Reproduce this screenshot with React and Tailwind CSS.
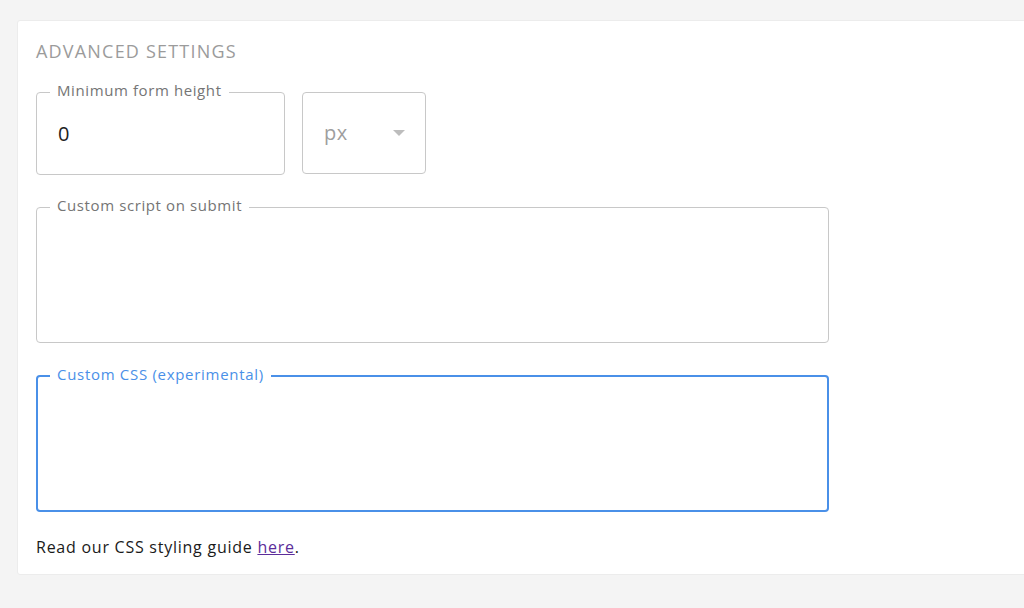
import React from "react";

export default function App() {
  const font = { fontFamily: "'Open Sans', Lato, sans-serif" };
  return (
    <div className="min-h-[608px] w-[1024px] bg-[#f4f4f4] pt-[20px] pl-[17px] overflow-hidden" style={font}>
      <div className="w-[1030px] bg-white rounded-[3px] border border-[#ececec] pl-[18px] pt-[20px] pb-[17px]">
        <div className="text-[18px] leading-[20px] text-[#9b9b9b] tracking-[1.2px]">ADVANCED SETTINGS</div>

        <div className="mt-[22px] flex gap-[17px]">
          <fieldset className="w-[249px] border border-[#c8c8c8] rounded-[4px] px-[13px]">
            <legend className="px-[7px] text-[15px] leading-[18px] text-[#757575] tracking-[0.6px]">
              <span className="relative top-[-2px]">Minimum form height</span>
            </legend>
            <div className="h-[73px] pl-[8px] pt-[22px] text-[20px] leading-[22px] text-[#212121]">0</div>
          </fieldset>
          <div className="mt-[9px] w-[124px] h-[82px] border border-[#c8c8c8] rounded-[4px] flex items-center pl-[21px] pr-[20px]">
            <span className="text-[20px] text-[#9e9e9e] leading-[22px] tracking-[0.5px]">px</span>
            <svg className="ml-auto" width="12" height="6" viewBox="0 0 12 6">
              <path d="M0 0 L12 0 L6 6 Z" fill="#bdbdbd" />
            </svg>
          </div>
        </div>

        <fieldset className="mt-[23px] w-[793px] border border-[#c8c8c8] rounded-[4px] px-[13px]">
          <legend className="px-[7px] text-[15px] leading-[18px] text-[#757575] tracking-[0.6px]">
            <span className="relative top-[-2px]">Custom script on submit</span>
          </legend>
          <div className="h-[126px]"></div>
        </fieldset>

        <fieldset className="mt-[24px] w-[793px] border-2 border-[#4a90e8] rounded-[4px] px-[12px]">
          <legend className="px-[7px] text-[15px] leading-[18px] text-[#4a90e8] tracking-[0.7px]">
            <span className="relative top-[-2px]">Custom CSS (experimental)</span>
          </legend>
          <div className="h-[125px]"></div>
        </fieldset>

        <p className="mt-[25px] text-[16px] leading-[20px] text-[#1a1a1a] tracking-[0.75px]">
          Read our CSS styling guide <a href="#" className="underline text-[#5c2d9a]">here</a>.
        </p>
      </div>
    </div>
  );
}
